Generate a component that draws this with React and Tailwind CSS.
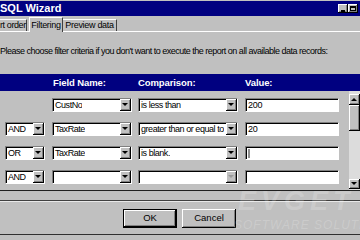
import React from 'react';

const raised = 'bg-[#c0c0c0] shadow-[inset_-1px_-1px_0_#000,inset_1px_1px_0_#fff,inset_-2px_-2px_0_#808080]';
const sunken = 'bg-white border border-t-[#808080] border-l-[#808080] border-b-white border-r-white shadow-[inset_1px_1px_0_#000]';

function Arrow({ dir = 'down', disabled = false }) {
  const pts = dir === 'down' ? '0,0 6,0 3,3' : '0,3 6,3 3,0';
  return (
    <svg width="7" height="4" viewBox="0 0 7 4">
      <polygon points={pts} fill={disabled ? '#9a9a9a' : '#000'} />
    </svg>
  );
}

function Combo({ text, width, disabled }) {
  return (
    <div className={`${sunken} h-[14px] flex items-center justify-between`} style={{ width }}>
      <span className="pl-[2px] text-[9px] tracking-[-0.45px] leading-none text-black whitespace-nowrap overflow-hidden">{text}</span>
      <div className={`${raised} w-[11px] h-[12px] shrink-0 flex items-center justify-center`}>
        <Arrow disabled={disabled} />
      </div>
    </div>
  );
}

function ValueBox({ text, cursor }) {
  return (
    <div className={`${sunken} h-[14px] w-[94px] flex items-center`}>
      {cursor && <div className="ml-[2px] w-[2px] h-[9px] bg-[#909090]" />}
      <span className="pl-[2px] text-[9px] tracking-[-0.3px] leading-none text-black">{text}</span>
    </div>
  );
}

const rows = [
  { op: null, field: 'CustNo', cmp: 'is less than', val: '200' },
  { op: 'AND', field: 'TaxRate', cmp: 'greater than or equal to', val: '20' },
  { op: 'OR', field: 'TaxRate', cmp: 'is blank.', val: '', cursor: true },
  { op: 'AND', field: '', cmp: '', val: '', disabled: true },
];

export default function App() {
  return (
    <div className="w-[360px] h-[240px] bg-[#c0c0c0] overflow-hidden relative flex flex-col text-black" style={{ fontFamily: '"Liberation Sans", Arial, sans-serif' }}>
      {/* title bar */}
      <div className="mt-[1px] h-[15px] bg-[#000080] flex items-center justify-between">
        <span className="text-white font-bold text-[11px] leading-none pl-0">SQL Wizard</span>
        <div className="flex mr-[2px]">
          <div className={`${raised} w-[10px] h-[9px] flex items-end justify-center pb-[1px]`}>
            <div className="w-[4px] h-[2px] bg-black" />
          </div>
          <div className={`${raised} w-[10px] h-[9px] flex items-center justify-center`}>
            <div className="w-[6px] h-[5px] border border-black border-t-2" />
          </div>
        </div>
      </div>

      {/* tabs */}
      <div className="h-[15px] flex items-end">
        <div className="h-[12px] w-[27px] border-t border-white border-r border-r-[#404040] flex items-center justify-start">
          <span className="text-[9px] tracking-[-0.4px] leading-none whitespace-nowrap">rt order</span>
        </div>
        <div className="ml-[2px] h-[15px] w-[34px] border-t border-l border-white border-r border-r-[#404040] bg-[#c0c0c0] relative z-10 -mb-[1px] flex items-center justify-center">
          <span className="text-[9px] tracking-[-0.3px] leading-none">Filtering</span>
        </div>
        <div className="h-[12px] w-[54px] border-t border-white border-r border-r-[#404040] flex items-center justify-center">
          <span className="text-[9px] tracking-[-0.3px] leading-none whitespace-nowrap">Preview data</span>
        </div>
      </div>

      {/* panel */}
      <div className="flex-1 border-t border-white flex flex-col">
        <p className="mt-[15px] text-[9px] leading-none whitespace-nowrap pl-0 tracking-[-0.5px]">
          Please choose filter criteria if you don't want to execute the report on all available data records:
        </p>

        {/* grid */}
        <div className="mt-[18px] flex flex-col">
          <div className="h-[17px] bg-[#000080] flex items-center text-white font-bold text-[9.5px] tracking-[-0.1px] leading-none">
            <span className="ml-[53px] w-[85px]">Field Name:</span>
            <span className="w-[107px]">Comparison:</span>
            <span>Value:</span>
          </div>
          <div className="h-[100px] flex border-b border-[#202020]">
            <div className="flex-1 flex flex-col pt-[7px] gap-[10px]">
              {rows.map((r, i) => (
                <div key={i} className="flex h-[14px] items-center">
                  <div className="ml-[5px] w-[40px]">
                    {r.op && <Combo text={r.op} width={40} />}
                  </div>
                  <div className="ml-[7px]">
                    <Combo text={r.field} width={80} />
                  </div>
                  <div className="ml-[6px]">
                    <Combo text={r.cmp} width={100} disabled={r.disabled} />
                  </div>
                  <div className="ml-[7px]">
                    <ValueBox text={r.val} cursor={r.cursor} />
                  </div>
                </div>
              ))}
            </div>
            {/* scrollbar */}
            <div className="w-[11px] bg-[#dcdcdc] flex flex-col">
              <div className={`${raised} mt-[3px] h-[11px] flex items-center justify-center`}>
                <Arrow dir="up" />
              </div>
              <div className={`${raised} h-[26px]`} />
              <div className="flex-1" />
              <div className={`${raised} h-[10px] mb-[1px] flex items-center justify-center`}>
                <Arrow />
              </div>
            </div>
          </div>
        </div>

        <div className="mt-[9px] h-[2px] border-t border-[#404040] border-b border-b-[#e8e8e8]" />

        {/* buttons */}
        <div className="mt-[7px] flex">
          <div className="ml-[123px] w-[54px] h-[19px] border border-black">
            <div className={`${raised} w-full h-full flex items-center justify-center text-[9.5px]`}>OK</div>
          </div>
          <div className={`${raised} ml-[5px] w-[54px] h-[19px] flex items-center justify-center text-[9.5px]`}>Cancel</div>
        </div>
        <div className="mt-[6px] h-[1px] bg-[#303030]" />
      </div>

      {/* watermark */}
      <div className="absolute left-[238px] top-[188px] pointer-events-none flex flex-col italic text-white/20 leading-none">
        <span className="font-black text-[27px] tracking-[5px]">EVGET</span>
        <span className="mt-[4px] -ml-[4px] text-[12px] tracking-[1px] whitespace-nowrap">SOFTWARE SOLUTIONS</span>
      </div>
    </div>
  );
}
